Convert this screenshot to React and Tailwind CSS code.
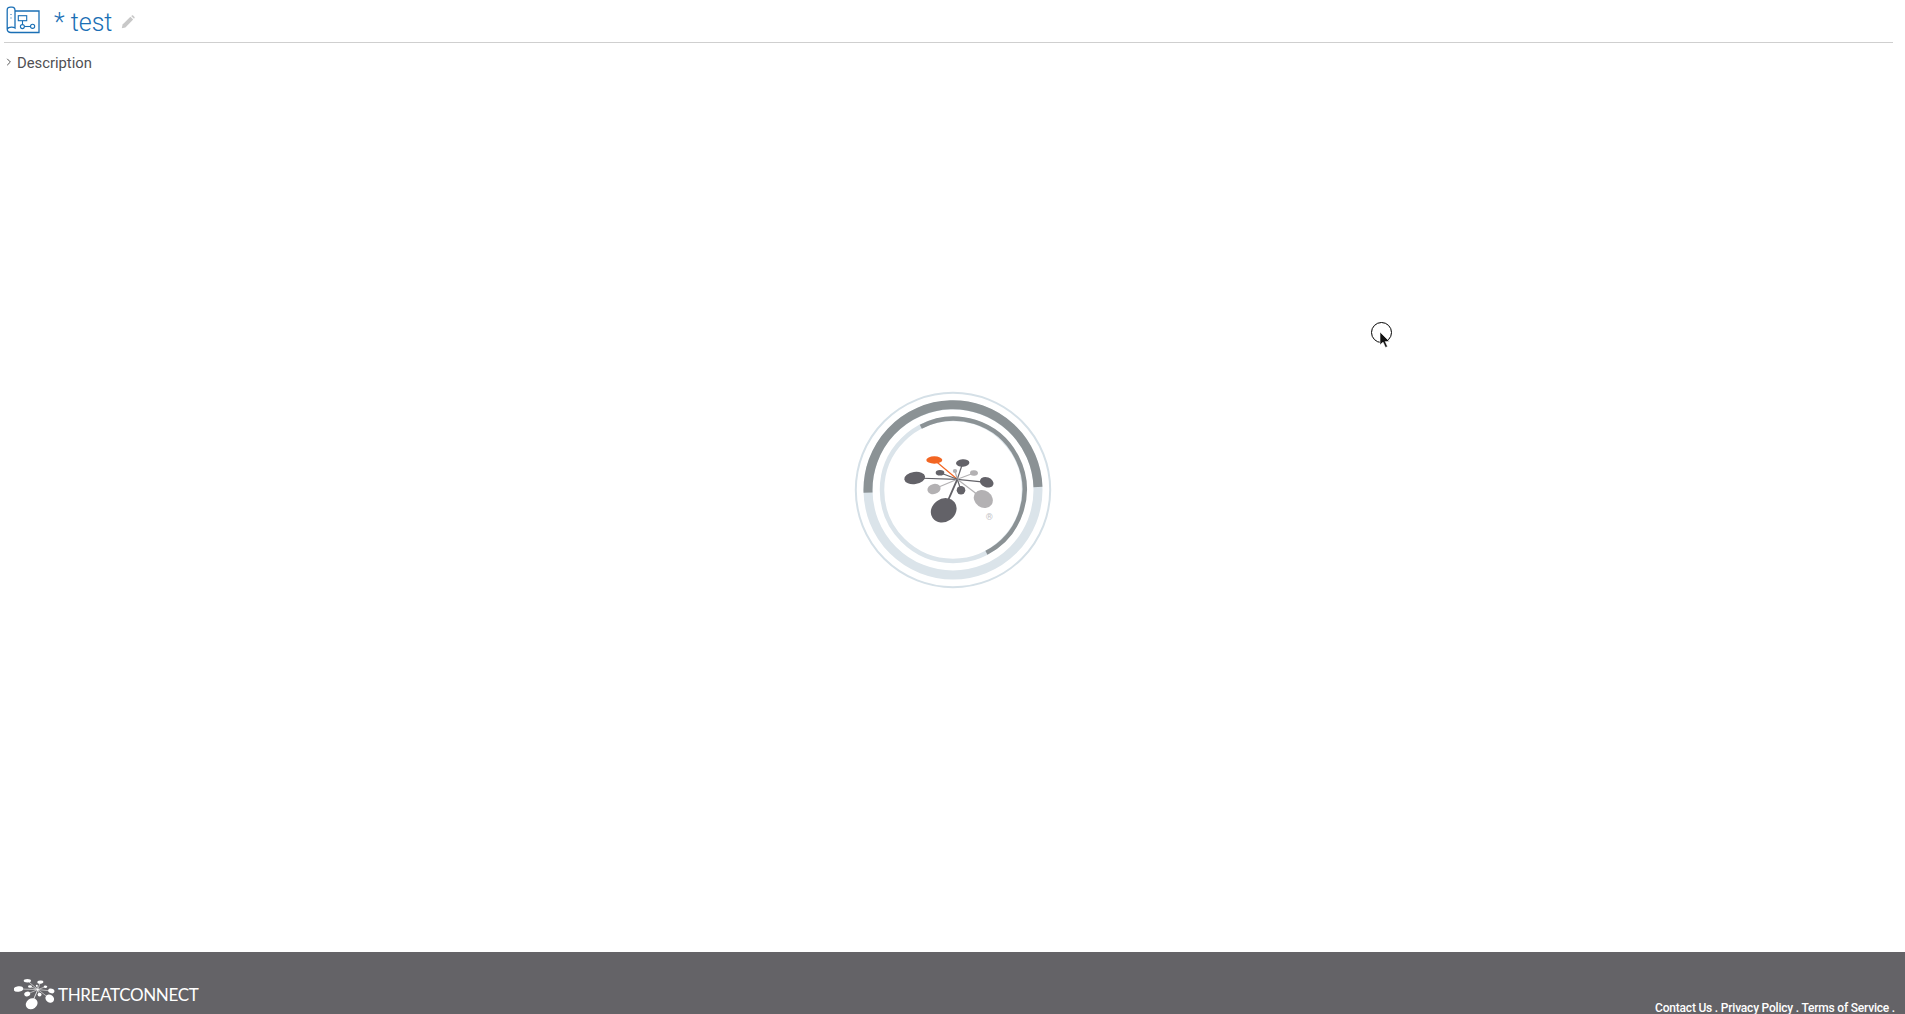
import React from "react";

// petals of the logo: x, y, rx, ry, rotation, colour
const petals = [
  [81.3, 70, 8, 3.7, 0, "#f26522"],
  [109.7, 73, 6.7, 3.7, -5, "#636268"],
  [102, 81, 2.2, 2, 0, "#b3b1b3"],
  [121, 83, 4, 2.8, 5, "#b3b1b3"],
  [87, 82.7, 4.3, 2.8, 0, "#636268"],
  [61.7, 88, 10.5, 6, -8, "#636268"],
  [133.7, 92.3, 7, 5, 20, "#636268"],
  [81, 99, 6.7, 5, -15, "#b3b1b3"],
  [108, 100.3, 4.3, 4.2, 0, "#636268"],
  [130.3, 109, 10, 8.5, 35, "#b3b1b3"],
  [90.7, 120.3, 13.5, 11.5, -35, "#636268"],
];

function Petals({ hub, petalColor, lineColor }) {
  return (
    <>
      {petals.map(([x, y, rx, ry, rot, color], i) => (
        <g key={i}>
          <line x1={hub[0]} y1={hub[1]} x2={x} y2={y} stroke={lineColor || color} strokeWidth={i === 10 ? 1.8 : 1.2} />
          <ellipse cx={x} cy={y} rx={rx} ry={ry} transform={`rotate(${rot} ${x} ${y})`} fill={petalColor || color} />
        </g>
      ))}
    </>
  );
}

function Loader() {
  return (
    <svg width="200" height="200" viewBox="0 0 200 200" fill="none">
      <circle cx="100" cy="100" r="97.2" stroke="#d5e0e7" strokeWidth="2" />
      <circle cx="100" cy="100" r="85" stroke="#dbe4ea" strokeWidth="9" />
      <path d="M 15.03 102.6 A 85 85 0 0 1 184.97 97" stroke="#8b9295" strokeWidth="9" />
      <circle cx="100" cy="100" r="71" stroke="#dbe4ea" strokeWidth="4.5" />
      <path d="M 67.8 36.7 A 71 71 0 0 1 133.4 162.7" stroke="#8b9295" strokeWidth="4.5" />
      <Petals hub={[104.3, 89.3]} />
      <text x="136.3" y="129.8" textAnchor="middle" fontSize="9" fill="#c4c4c6" fontFamily="Roboto, sans-serif">®</text>
    </svg>
  );
}

function MapIcon() {
  return (
    <svg width="36" height="30" viewBox="0 0 36 30" fill="none" stroke="#1a6fb5" strokeWidth="1.3">
      <path d="M9 5 H33 V26.5 H5 C2.5 26.5 1.2 25 1.2 23 V4 C1.2 2 2.5 1.2 4.5 1.2 H6 C8 1.2 9 2.5 9 4.5 V22 C7.5 21 3 20.5 1.2 23" />
      <path d="M5 8 V9 M5 11.5 V12.5" strokeWidth="1" />
      <rect x="12.3" y="9.7" width="8.4" height="5" strokeWidth="1.1" />
      <path d="M16.5 14.7 V18.5" strokeWidth="1.1" />
      <circle cx="16.4" cy="20.6" r="2" strokeWidth="1.1" />
      <path d="M18.4 20.5 H24.5" strokeWidth="1.1" />
      <circle cx="26.6" cy="20.3" r="2.1" strokeWidth="1.1" />
    </svg>
  );
}

function Pencil() {
  return (
    <svg width="14" height="14" viewBox="0 0 14 14" fill="#c8c8c8">
      <path d="M0.8 13.2 L1.6 9.6 L9.4 1.8 L12.2 4.6 L4.4 12.4 Z" />
      <path d="M10.2 1 L11 0.5 C11.5 0.2 11.9 0.3 12.3 0.7 L13.3 1.7 C13.7 2.1 13.8 2.5 13.5 3 L13 3.8 Z" />
    </svg>
  );
}

function FooterLogo() {
  return (
    <svg width="42" height="34" viewBox="52 62 92 74">
      <Petals hub={[104.3, 89.3]} petalColor="#ffffff" lineColor="#ffffff" />
    </svg>
  );
}

export default function App() {
  return (
    <div className="relative flex h-screen flex-col overflow-hidden bg-white font-['Roboto',sans-serif]">
      <header className="mx-[4px] mr-[12px] flex h-[43px] items-center border-b border-[#cfcfcf] pb-[1px]">
        <div className="ml-[2px] mt-[1px]">
          <MapIcon />
        </div>
        <h1 className="ml-[12px] mt-[4px] text-[25px] leading-none font-light text-[#1a6fb5]">* test</h1>
        <div className="ml-[9px] mt-[2px]">
          <Pencil />
        </div>
      </header>

      <div className="flex h-[41px] items-center pl-[6px]">
        <svg className="mb-[4px]" width="6" height="8" viewBox="0 0 6 8" fill="none" stroke="#555" strokeWidth="1">
          <path d="M1.2 0.8 L4.4 4 L1.2 7.2" />
        </svg>
        <span className="ml-[5px] text-[14.8px] font-normal text-[#505054]">Description</span>
      </div>

      <main className="flex flex-1 justify-center pt-[306px]">
        <Loader />
      </main>

      <footer className="flex h-[62px] shrink-0 justify-between overflow-hidden bg-[#646367] text-white">
        <div className="ml-[14px] mt-[25px] flex h-[34px] items-center">
          <FooterLogo />
          <span className="ml-[2px] font-['Lato',sans-serif] text-[17px] leading-none font-normal tracking-[-0.35px]">THREATCONNECT</span>
        </div>
        <div className="mr-[10px] mt-[50px] text-[12px] leading-[12px] font-medium tracking-[-0.2px]">
          Contact Us . Privacy Policy . Terms of Service .
        </div>
      </footer>

      {/* recording cursor */}
      <div className="absolute left-[1371px] top-[322px]">
        <div className="h-[21px] w-[21px] rounded-full border border-black" />
        <svg className="absolute left-[8px] top-[9px]" width="12" height="18" viewBox="0 0 12 18">
          <path d="M1 1 V14 L4 11 L6.5 16.5 L8.5 15.5 L6.2 10.5 H10.5 Z" fill="#111" stroke="#fff" strokeWidth="0.6" />
        </svg>
      </div>
    </div>
  );
}
